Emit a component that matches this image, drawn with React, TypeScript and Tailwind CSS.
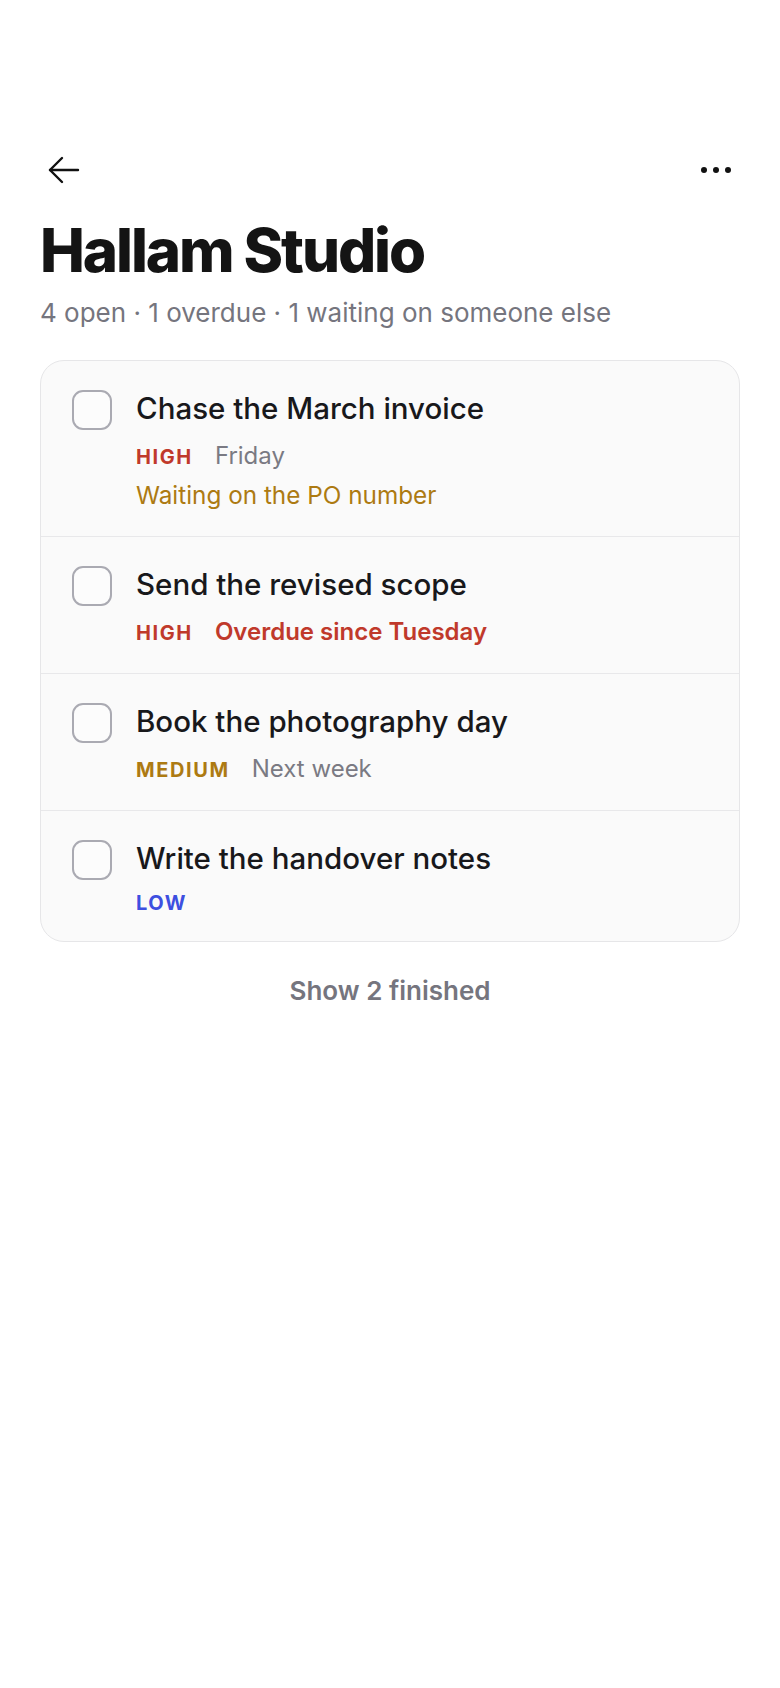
import React from 'react';

type Tone = 'high' | 'medium' | 'low';

interface Task {
  id: number;
  title: string;
  priority: Tone;
  due?: string;
  overdue?: boolean;
  note?: string;
}

const tasks: Task[] = [
  { id: 1, title: 'Chase the March invoice', priority: 'high', due: 'Friday', note: 'Waiting on the PO number' },
  { id: 2, title: 'Send the revised scope', priority: 'high', due: 'Overdue since Tuesday', overdue: true },
  { id: 3, title: 'Book the photography day', priority: 'medium', due: 'Next week' },
  { id: 4, title: 'Write the handover notes', priority: 'low' },
];

const priorityClass: Record<Tone, string> = {
  high: 'text-[#c0392b]',
  medium: 'text-[#ad7a12]',
  low: 'text-[#3d4fe0]',
};

const priorityLabel: Record<Tone, string> = {
  high: 'HIGH',
  medium: 'MEDIUM',
  low: 'LOW',
};

function BackArrow() {
  return (
    <svg width="32" height="28" viewBox="0 0 32 28" fill="none" stroke="#111" strokeWidth="2.4" strokeLinecap="round" strokeLinejoin="round">
      <path d="M30 14H2" />
      <path d="M14 2 2 14l12 12" />
    </svg>
  );
}

function MoreDots() {
  return (
    <svg width="32" height="8" viewBox="0 0 32 8" fill="#111">
      <circle cx="4" cy="4" r="3" />
      <circle cx="16" cy="4" r="3" />
      <circle cx="28" cy="4" r="3" />
    </svg>
  );
}

function TaskRow({ task }: { task: Task }) {
  return (
    <div className="flex items-start gap-6 pl-[31px] pr-6 pt-[29px] pb-[26px]">
      {/* Checkbox */}
      <div className="h-10 w-10 shrink-0 rounded-[11px] border-2 border-[#aaaab2] bg-white/40" />

      <div className="flex min-w-0 flex-col gap-[15px]">
        <div className="text-[29.5px] font-medium leading-9 text-[#18181b]">{task.title}</div>
        <div className="flex flex-col gap-[9px]">
          <div className="flex items-baseline gap-[22px]">
            <span className={`text-[20px] font-bold leading-6 tracking-[0.08em] ${priorityClass[task.priority]}`}>
              {priorityLabel[task.priority]}
            </span>
            {task.due && (
              <span
                className={
                  task.overdue
                    ? 'text-[24px] font-semibold leading-[30px] text-[#c0392b]'
                    : 'text-[24px] leading-[30px] text-[#7a7a83]'
                }
              >
                {task.due}
              </span>
            )}
          </div>
          {task.note && <div className="text-[24.3px] leading-[30px] text-[#ad7a12]">{task.note}</div>}
        </div>
      </div>
    </div>
  );
}

export default function App() {
  return (
    <div
      className="min-h-[1688px] bg-white px-10 pt-[146px] pb-20"
      style={{ fontFamily: 'Inter, "Noto Sans", sans-serif' }}
    >
      {/* Header */}
      <div className="flex h-12 items-center justify-between px-[8px]">
        <BackArrow />
        <MoreDots />
      </div>

      <h1 className="mt-[23px] text-[60px] font-extrabold leading-[66px] tracking-[-0.035em] text-[#141414]">
        Hallam Studio
      </h1>
      <p className="mt-[14px] text-[26px] leading-8 text-[#75757e]">
        4 open · 1 overdue · 1 waiting on someone else
      </p>

      {/* Task list */}
      <div className="mt-[31px] overflow-hidden rounded-3xl border border-[#e6e6e8] bg-[#fafafa] divide-y divide-[#e8e8ea]">
        {tasks.map((task) => (
          <TaskRow key={task.id} task={task} />
        ))}
      </div>

      <div className="mt-[33px] text-center text-[26px] font-semibold leading-8 text-[#75757e]">
        Show 2 finished
      </div>
    </div>
  );
}
